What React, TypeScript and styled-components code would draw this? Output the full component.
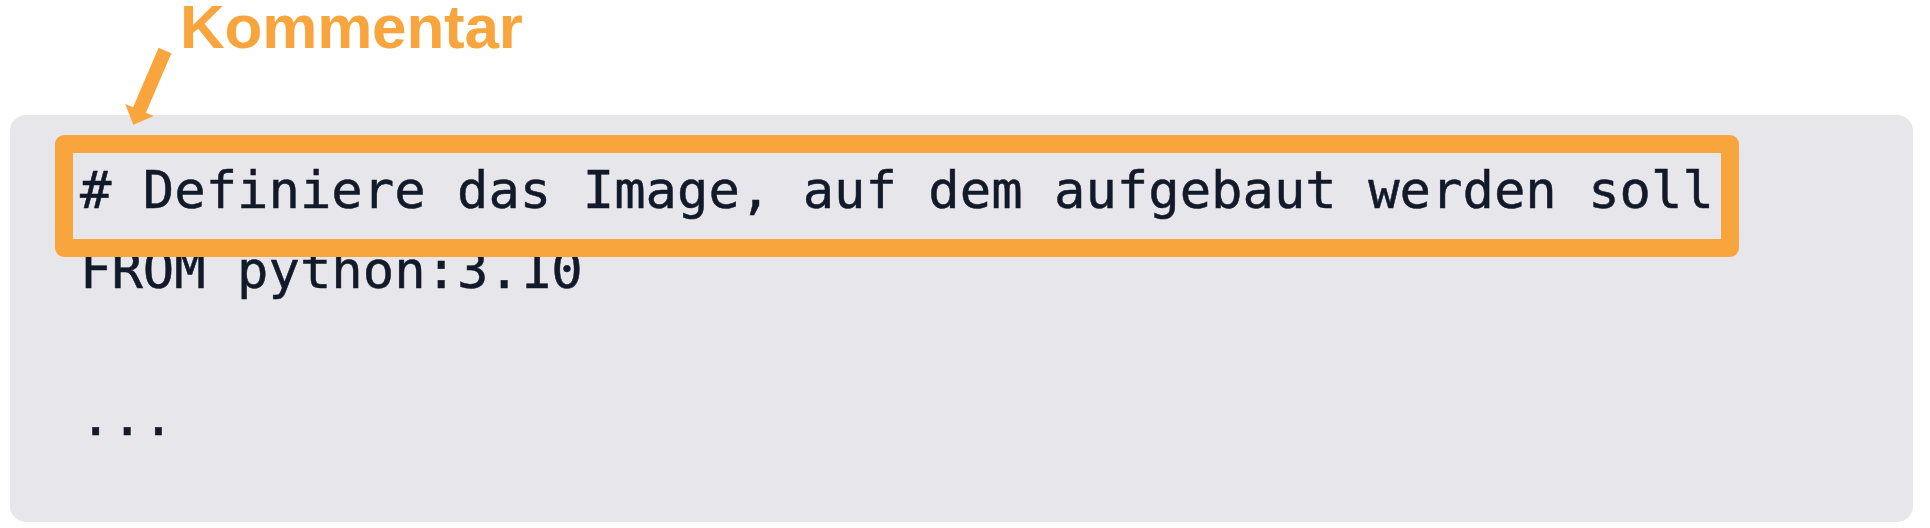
import React from "react";
import styled, { createGlobalStyle } from "styled-components";

const GlobalStyle = createGlobalStyle`
  html, body {
    margin: 0;
    padding: 0;
    background: #ffffff;
  }
  body {
    font-family: "Liberation Sans", Arial, sans-serif;
  }
`;

const ORANGE = "#f9a53e";

const Page = styled.div`
  position: relative;
  width: 1930px;
  height: 528px;
  box-sizing: border-box;
  padding: 0 17px 6px 10px;
  display: flex;
  flex-direction: column;
  overflow: hidden;
`;

const Header = styled.div`
  height: 115px;
  display: flex;
  align-items: flex-start;
  padding-left: 170px;
  padding-top: 1px;
  box-sizing: border-box;
`;

const Label = styled.span`
  font-family: "Liberation Sans", Arial, sans-serif;
  font-weight: 700;
  font-size: 62px;
  line-height: 52px;
  color: ${ORANGE};
  letter-spacing: -0.2px;
`;

const Arrow = styled.svg`
  position: absolute;
  left: 0;
  top: 0;
  z-index: 3;
  pointer-events: none;
`;

const CodePanel = styled.div`
  position: relative;
  flex: 1;
  background: #e6e6eb;
  border-radius: 16px;
  padding: 35px 0 0 70px;
  box-sizing: border-box;
  font-family: "DejaVu Sans Mono", "Liberation Mono", monospace;
  font-size: 52.2px;
  color: #121a2a;
  -webkit-text-stroke: 0.5px #121a2a;
`;

const CodeLine = styled.div<{ $h?: number }>`
  height: ${(p) => p.$h ?? 80}px;
  line-height: 80px;
  white-space: pre;
`;

const Highlight = styled.div`
  position: absolute;
  left: 45px;
  top: 20px;
  width: 1684px;
  height: 122px;
  box-sizing: border-box;
  border: 18px solid ${ORANGE};
  border-radius: 9px;
  background: transparent;
  z-index: 2;
`;

export default function App() {
  return (
    <>
      <GlobalStyle />
      <Page>
        <Header>
          <Label>Kommentar</Label>
        </Header>
        <CodePanel>
          <CodeLine># Definiere das Image, auf dem aufgebaut werden soll</CodeLine>
          <CodeLine>FROM python:3.10</CodeLine>
          <CodeLine $h={67}> </CodeLine>
          <CodeLine>...</CodeLine>
          <Highlight />
        </CodePanel>
        <Arrow width="200" height="140" viewBox="0 0 200 140">
          <polygon
            points="158.6,47.8 171.4,53.2 145.9,112.7 153.8,116 133.3,124.7 125.2,104 133.1,107.3"
            fill={ORANGE}
          />
        </Arrow>
      </Page>
    </>
  );
}
